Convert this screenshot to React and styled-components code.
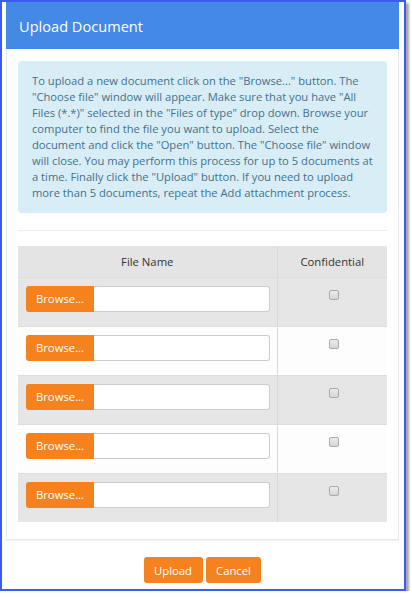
import React from "react";
import styled, { createGlobalStyle } from "styled-components";

const GlobalStyle = createGlobalStyle`
  html, body {
    margin: 0;
    padding: 0;
    background: #ffffff;
    font-family: "Open Sans", "Liberation Sans", sans-serif;
  }
  * {
    box-sizing: border-box;
  }
`;

const Frame = styled.div`
  width: 406px;
  height: 591px;
  border: 2px solid #3a5cf0;
  background: #ffffff;
  box-shadow: 3px 3px 2px rgba(0, 0, 0, 0.35);
  padding: 0 5px 0 4px;
  display: flex;
  flex-direction: column;
`;

const Header = styled.div`
  height: 47px;
  background: #4489e6;
  color: #ffffff;
  font-size: 14.6px;
  padding: 0 13px;
  display: flex;
  align-items: center;
`;

const Panel = styled.div`
  border: 1px solid #e8e8e8;
  border-top: none;
  box-shadow: 0 1px 1px rgba(0, 0, 0, 0.05);
  padding: 12px 11px 16px;
  height: 491px;
`;

const Info = styled.div`
  background: #d9edf7;
  border-radius: 4px;
  color: #41728c;
  font-size: 11.2px;
  line-height: 16px;
  padding: 12px 13px 12px 14px;
`;

const Divider = styled.hr`
  border: none;
  border-top: 1px solid #eeeeee;
  margin: 17px 0 15px;
`;

const Table = styled.table`
  width: 100%;
  border-collapse: collapse;
  font-size: 11.3px;
  color: #333333;
`;

const Th = styled.th`
  background: #e4e4e4;
  font-weight: normal;
  height: 31px;
  padding: 0 8px;
  text-align: center;
  border-left: ${(p) => (p.$divider ? "1px solid #d9d9d9" : "none")};
`;

const Row = styled.tr`
  background: ${(p) => (p.$odd ? "#e6e6e6" : "#fdfdfd")};
  border-top: 1px solid #dddddd;
`;

const Td = styled.td`
  height: 49px;
  vertical-align: top;
  padding: 8px 7px 0 8px;
  width: ${(p) => p.$width || "auto"};
  text-align: ${(p) => p.$align || "left"};
  border-left: ${(p) => (p.$divider ? "1px solid #d9d9d9" : "none")};
`;

const FileGroup = styled.div`
  display: flex;
  height: 26px;
`;

const BrowseButton = styled.button`
  width: 68px;
  border: none;
  background: #f5821f;
  color: #ffffff;
  font: inherit;
  font-size: 11.3px;
  border-radius: 3px 0 0 3px;
  padding: 0;
`;

const FileInput = styled.div`
  flex: 1;
  background: #ffffff;
  border: 1px solid #cccccc;
  border-left: none;
  border-radius: 0 3px 3px 0;
`;

const Check = styled.input.attrs({ type: "checkbox" })`
  appearance: none;
  width: 10px;
  height: 10px;
  margin: 4px 0 0 2px;
  border: 1px solid #a9a9a9;
  border-radius: 2px;
  background: linear-gradient(#ececec, #d6d6d6);
`;

const Footer = styled.div`
  display: flex;
  justify-content: center;
  gap: 3px;
  padding-top: 17px;
`;

const ActionButton = styled.button`
  height: 26px;
  padding: 0 10.5px;
  border: none;
  border-radius: 3px;
  background: #f5821f;
  color: #ffffff;
  font: inherit;
  font-size: 11.3px;
`;

export default function App() {
  const rows = [0, 1, 2, 3, 4];
  return (
    <>
      <GlobalStyle />
      <Frame>
        <Header>Upload Document</Header>
        <Panel>
          <Info>
            To upload a new document click on the "Browse..." button. The
            "Choose file" window will appear. Make sure that you have "All
            Files (*.*)" selected in the "Files of type" drop down. Browse your
            computer to find the file you want to upload. Select the document
            and click the "Open" button. The "Choose file" window will close.
            You may perform this process for up to 5 documents at a time.
            Finally click the "Upload" button. If you need to upload more than 5
            documents, repeat the Add attachment process.
          </Info>
          <Divider />
          <Table>
            <thead>
              <tr>
                <Th>File Name</Th>
                <Th $divider>Confidential</Th>
              </tr>
            </thead>
            <tbody>
              {rows.map((i) => (
                <Row key={i} $odd={i % 2 === 0}>
                  <Td>
                    <FileGroup>
                      <BrowseButton>Browse...</BrowseButton>
                      <FileInput />
                    </FileGroup>
                  </Td>
                  <Td $divider $width="110px" $align="center">
                    <Check />
                  </Td>
                </Row>
              ))}
            </tbody>
          </Table>
        </Panel>
        <Footer>
          <ActionButton>Upload</ActionButton>
          <ActionButton>Cancel</ActionButton>
        </Footer>
      </Frame>
    </>
  );
}
